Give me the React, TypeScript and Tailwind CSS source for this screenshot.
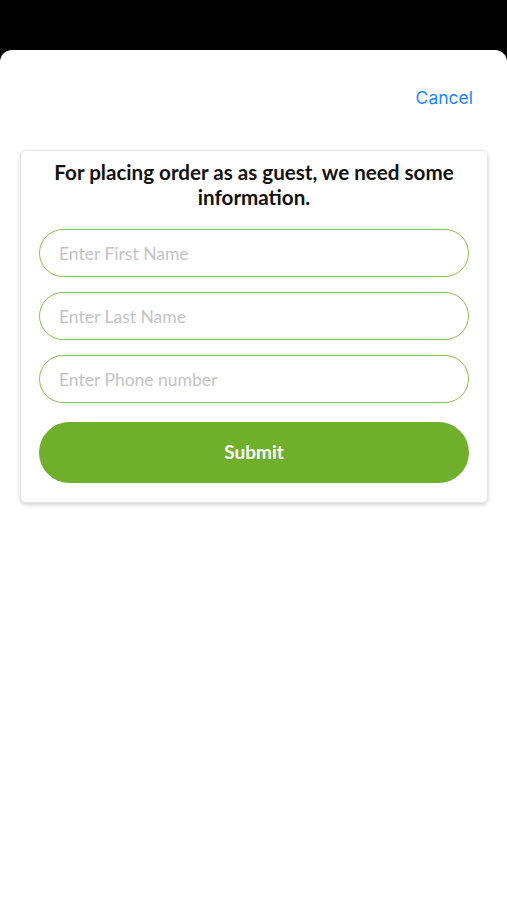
import React from "react";

export default function App() {
  const inputs = ["Enter First Name", "Enter Last Name", "Enter Phone number"];
  return (
    <div className="w-[507px] h-[900px] bg-black flex flex-col">
      <div className="mt-[50px] flex-1 bg-white rounded-t-[12px] flex flex-col">
        <div className="flex justify-end pr-[34px] pt-[36px] h-[100px]">
          <span className="text-[17.5px] leading-[24px] text-[#1e88f5] font-['Inter','Roboto',sans-serif]">Cancel</span>
        </div>
        <div className="mx-[20px] w-[468px] rounded-[6px] bg-white border border-[#e6e6e6] shadow-[0_2px_4px_rgba(0,0,0,0.18)] px-[18px] pt-[9px] pb-[19px] flex flex-col font-['Lato',sans-serif]">
          <h1 className="text-center font-bold text-[20.6px] leading-[25px] text-[#111] px-[4px]">
            For placing order as as guest, we need some information.
          </h1>
          <div className="mt-[19px] flex flex-col gap-[15px]">
            {inputs.map((p) => (
              <input
                key={p}
                placeholder={p}
                className="h-[48px] w-full rounded-full border-[1.5px] border-[#8cc152] px-[19px] text-[17.5px] font-['Lato',sans-serif] placeholder:text-[#c4c4c4] outline-none"
              />
            ))}
          </div>
          <button className="mt-[19px] h-[61px] w-full rounded-full bg-[#6faf2c] text-white font-bold text-[19px] font-['Lato',sans-serif]">
            Submit
          </button>
        </div>
      </div>
    </div>
  );
}
